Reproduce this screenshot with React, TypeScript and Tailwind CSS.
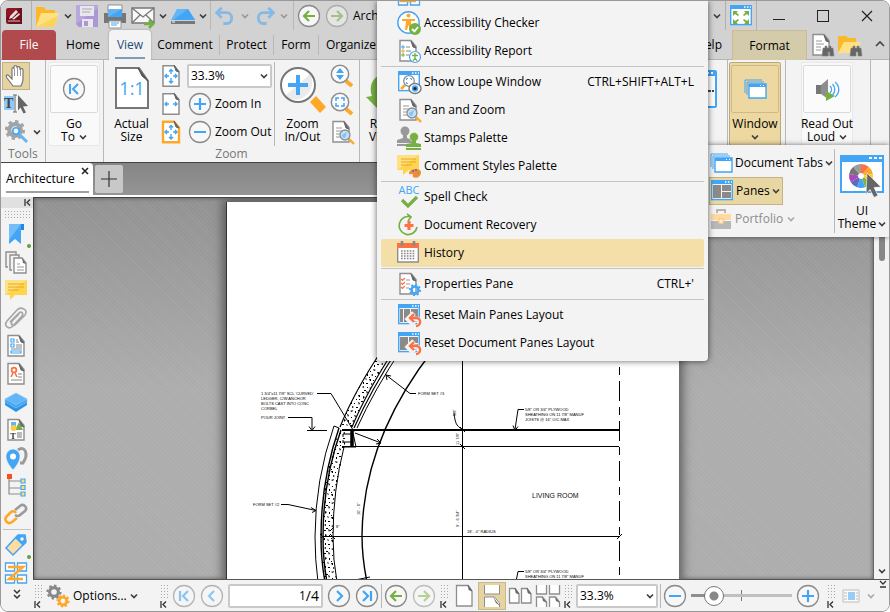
import React from 'react';

type IconProps = { className?: string };
type Children = { children?: React.ReactNode };

const BLUE = '#42a5f5';
const GREEN = '#76b043';
const ORANGE = '#ffa726';
const GRAY = '#8e8e8e';

const Svg = ({ className = 'size-6', box = 24, children }: IconProps & Children & { box?: number }) => (
  <svg className={`${className} shrink-0 overflow-visible`} viewBox={`0 0 ${box} ${box}`} fill="none" aria-hidden="true">
    {children}
  </svg>
);

const Chevron = ({ className = 'text-[#404040]' }: IconProps) => (
  <svg className={`h-2 w-2 shrink-0 ${className}`} viewBox="0 0 8 8" fill="none" aria-hidden="true">
    <path d="M1 2.5l3 3 3-3" stroke="currentColor" strokeWidth="1.7" />
  </svg>
);

// Sheet of paper with a folded corner, used as the base of many icons
const Sheet = () => (
  <>
    <path d="M3 1.5h11l5 6V22H3z" fill="#fff" stroke={GRAY} strokeWidth="1.4" />
    <path d="M14 2l5 7-3-1z" fill="#666" stroke="#666" />
  </>
);

const Gear = ({ cx, cy, r, color }: { cx: number; cy: number; r: number; color: string }) => (
  <>
    <circle cx={cx} cy={cy} r={r * 0.58} stroke={color} strokeWidth={r * 0.42} />
    <circle cx={cx} cy={cy} r={r * 0.86} stroke={color} strokeWidth={r * 0.3} pathLength="16" strokeDasharray="1 1" />
  </>
);

const Lens = ({ x, y }: { x: number; y: number }) => (
  <g transform={`translate(${x} ${y})`}>
    <path d="M4 4l5 5" stroke={ORANGE} strokeWidth="2.4" />
    <circle r="5" fill="#bfe0fa" stroke={GRAY} strokeWidth="1.3" />
    <path d="M-3 0a3 3 0 003 3L2-3z" fill={BLUE} opacity=".5" />
  </g>
);

const WindowFrame = ({ fill = '#fff' }: { fill?: string }) => (
  <>
    <rect x="1.7" y="2" width="20.6" height="18.6" fill={fill} stroke={BLUE} strokeWidth="1.4" />
    <path d="M1 1h22v4H1z" fill={BLUE} />
    <path d="M15 3h1.5M18 3h1.5M21 3h1" stroke="#fff" strokeWidth="1.5" />
  </>
);

const CircleIcon = ({ children, className = 'size-6' }: IconProps & Children) => (
  <Svg className={className}>
    <circle cx="12" cy="12" r="10.5" fill="#f7f7f7" stroke="#8a8a8a" strokeWidth="1.3" />
    {children}
  </Svg>
);

const ArrowLeft = () => <path d="M18 12H7m5-5l-5 5 5 5" stroke={GREEN} strokeWidth="2.2" />;
const ArrowRight = () => <path d="M6 12h11m-5-5l5 5-5 5" stroke={GREEN} strokeWidth="2.2" />;
const PlusSign = () => <path d="M12 6v12M6 12h12" stroke={BLUE} strokeWidth="2.2" />;
const MinusSign = () => <path d="M6 12h12" stroke={BLUE} strokeWidth="2" />;

const LogoIcon = () => (
  <Svg className="size-4" box={16}>
    <rect width="16" height="16" rx="2" fill="#8c1822" />
    <path d="M0 10L14 0h2v16H4z" fill="#6a111b" />
    <path d="M3 11l1-3 6-6 2 2-6 6zM6 11l7-6 1 1.5-6 5z" fill="#f3dcdd" />
    <path d="M2 13h12" stroke="#e8b9bb" strokeWidth="1.2" />
  </Svg>
);

const FolderIcon = () => (
  <Svg>
    <path d="M0 3h8l2 3h9v4L2 22H0z" fill="#fbb829" />
    <path d="M5 9h18l-5 14H0z" fill="#ffe083" />
    <path d="M0 23L22 12l-4 11z" fill="#ffd452" />
  </Svg>
);

const SaveIcon = () => (
  <Svg>
    <path d="M1 1h22v22H4l-3-3z" fill="#b9a8dc" />
    <path d="M1 20L23 4v19H4z" fill="#ac97d4" />
    <path d="M5 2h14v10H5zM7 15h11v8H7z" fill="#e9e6ee" />
    <path d="M7 5h10M7 8h8" stroke="#aaa" />
    <path d="M9 17h4v5H9z" fill="#ac97d4" />
  </Svg>
);

const PrinterIcon = () => (
  <Svg>
    <path d="M5 1h14v7H5z" fill="#fff" stroke={GRAY} />
    <path d="M1 9h22v10H1z" fill="#777" />
    <path d="M5 5h14v8H5z" fill="#64b5f6" />
    <path d="M5 13L19 5v8z" fill={BLUE} />
    <path d="M6 17h12v7H6z" fill="#fff" stroke="#999" />
    <path d="M8 19h8M8 21h6" stroke={BLUE} />
  </Svg>
);

const MailIcon = () => (
  <Svg>
    <path d="M1 4h22v15H1z" fill="#f8f8f8" stroke="#777" strokeWidth="1.4" />
    <path d="M1 4l11 9 11-9M1 19l8-8M23 19l-8-8" stroke="#777" strokeWidth="1.3" />
    <path d="M13 20h9m-4-4l4 4-4 4" stroke={GREEN} strokeWidth="2.6" />
  </Svg>
);

const ScannerIcon = () => (
  <Svg>
    <path d="M6 5h11l7 11H0z" fill="#64b5f6" />
    <path d="M17 5l7 11H2z" fill={BLUE} />
    <path d="M0 17h24v3H0z" fill="#777" />
    <path d="M1 18h3" stroke="#fff" />
  </Svg>
);

const UndoIcon = ({ className = 'size-6' }: IconProps) => (
  <Svg className={className}>
    <path d="M8 2L2 8l6 6M3 8h11c8 0 8 13 0 13h-4" stroke="#85b9e6" strokeWidth="3.4" />
  </Svg>
);

const FullscreenIcon = () => (
  <Svg>
    <WindowFrame />
    <path
      d="M4 7h5L7.500 8.500 10 11l-1 1-3-2-2 2zM20 7h-5l1.500 1.500L14 11l1 1 3-2 2 2zM4 20h5l-1.500-1.500L10 16l-1-1-3 2-2-2zM20 20h-5l1.500-1.500L14 16l1-1 3 2 2-2z"
      fill={GREEN}
    />
  </Svg>
);

const Binoculars = () => (
  <path d="M12 23l1-8h2v-2h2v2h2v-2h2v2h2l1 8h-4v-4h-2v4z" fill="#666" stroke="#888" strokeWidth=".6" />
);

const HandIcon = () => (
  <Svg>
    <path
      d="M9 22l-6-8c-2-3 1-4 2-2l3 3V5c0-2 2-2 2 0V3c0-2 3-2 3 0v1c0-2 3-1.5 3 0v2c0-2 3-1.5 3 0v9c0 3-1 4-2 7z"
      fill="#fff"
      stroke="#777"
      strokeWidth="1.2"
    />
    <path d="M10.500 5v7M13.500 4v8M16.500 6v6" stroke="#999" />
  </Svg>
);

const SelectTextIcon = () => (
  <Svg>
    <path d="M0 4h10v14H0z" fill="#90caf9" />
    <text x="0" y="16" fontSize="14" fontFamily="Liberation Serif, serif" fontWeight="bold" fill="#444">T</text>
    <path d="M9 3h4M9 20h4M11 3v17" stroke="#666" />
    <path d="M14 3l10 11-5 .5 3 6-2.500 1-3-6-2.500 3z" fill="#666" />
  </Svg>
);

const WrenchGearIcon = () => (
  <Svg>
    <Gear cx={10} cy={10} r={10} color="#a3a3a3" />
    <path d="M12 12l10 10" stroke="#64b5f6" strokeWidth="3" />
    <circle cx="11" cy="11" r="3.2" fill="#f3f3f3" stroke={BLUE} strokeWidth="1.600" />
  </Svg>
);

const FitIcon = ({ kind }: { kind: 'page' | 'width' | 'visible' }) => (
  <Svg>
    <path
      d="M4 1.700h11l5 6v14.600H4z"
      fill="#fff"
      stroke={kind === 'visible' ? ORANGE : GRAY}
      strokeWidth={kind === 'visible' ? 2.4 : 1.5}
    />
    <path d="M15 1l5 7-3-1z" fill="#666" stroke="#666" />
    <path d="M10 12H6m2-2l-2 2 2 2M14 12h4m-2-2l2 2-2 2" stroke={BLUE} strokeWidth="1.4" />
    {kind !== 'width' && <path d="M12 10V5.500m-2 2l2-2 2 2M12 14v5m-2-2l2 2 2-2" stroke={BLUE} strokeWidth="1.4" />}
  </Svg>
);

const ActualSizeIcon = () => (
  <svg className="h-[42px] w-[34px]" viewBox="0 0 34 42" fill="none" aria-hidden="true">
    <path d="M1 1h23l9 13v27H1z" fill="#fff" stroke="#777" strokeWidth="2" />
    <path d="M23 1l10 13-6-5z" fill="#555" stroke="#555" />
    <text x="17" y="28" fontSize="18" fontFamily="Open Sans, sans-serif" fontWeight="500" textAnchor="middle" fill={BLUE}>
      1:1
    </text>
  </svg>
);

const MagnifierIcon = () => (
  <svg className="size-[46px]" viewBox="0 0 46 46" fill="none" aria-hidden="true">
    <path d="M30 35l6-6 10 11-6 6z" fill={ORANGE} />
    <circle cx="18" cy="18" r="17" fill="#fff" />
    <path d="M5 29L30 7a17 17 0 01-25 22z" fill="#ebebeb" />
    <circle cx="18" cy="18" r="17" stroke="#777" strokeWidth="2" />
    <path d="M18 8v20M8 18h20" stroke={BLUE} strokeWidth="4" />
  </svg>
);

const SmallMagnifier = ({ kind }: { kind: 'dynamic' | 'marquee' }) => (
  <Svg>
    <path d="M16 17l6 5" stroke={ORANGE} strokeWidth="4" />
    <circle cx="10" cy="10" r="8.700" fill="#fafafa" stroke={GRAY} strokeWidth="1.5" />
    {kind === 'dynamic' ? (
      <path d="M6 9l4-5 4 5zM6 11l4 5 4-5z" fill={BLUE} />
    ) : (
      <path d="M6 9V6h3M11 6h3v3M14 11v3h-3M9 14H6v-3" stroke={BLUE} strokeWidth="1.5" />
    )}
  </Svg>
);

const PanZoomIcon = () => (
  <Svg>
    <Sheet />
    <path d="M6 8h6M6 11h8M6 14h5M6 17h5" stroke="#999" />
    <Lens x={15} y={15} />
  </Svg>
);

const RotateIcon = () => (
  <svg className="size-[46px]" viewBox="0 0 46 46" fill="none" aria-hidden="true">
    <path d="M1 30l12 12 9-4C7 33 10 15 26 10l-4-5C6 9 4 20 7 29z" fill={GREEN} />
  </svg>
);

const WindowsIcon = ({ className = 'size-6' }: IconProps) => (
  <Svg className={className}>
    <path d="M2 16V3h17M4 18V5h17" stroke={BLUE} />
    <path d="M6 7h17v14H6z" fill="#fff" stroke={BLUE} strokeWidth="1.4" />
    <path d="M6 7h17v3H6z" fill={BLUE} />
    <path d="M17 8.500h1M20 8.500h1" stroke="#fff" />
  </Svg>
);

const SpeakerIcon = () => (
  <Svg>
    <path d="M1 8h5v9H1z" fill="#777" />
    <path d="M6 8l7-6v20l-7-5z" fill="#8e8e8e" />
    <path d="M15 9c2 2 2 5 0 7M17.500 7c3 3 3 8 0 11M20 5c5 4 5 11 0 15" stroke={BLUE} strokeWidth="1.3" />
    <path d="M11 14l9 5-9 5z" fill={GREEN} />
  </Svg>
);

const PanesIcon = ({ columns = false, reset = false }: { columns?: boolean; reset?: boolean }) => (
  <Svg>
    <WindowFrame fill="#f3f3f3" />
    <path d={columns ? 'M3 6h3v13H3zM7 6h6v13H7zM14 6h7v13h-7z' : 'M3 6h8v13H3zM12 6h9v6h-9zM12 13h9v6h-9z'} fill="#8a8a8a" />
    {reset && (
      <>
        <path d="M17 10l-6 6 6 6M13 16h6c6 0 5 8 0 8" stroke="#f3f3f3" strokeWidth="5" />
        <path d="M17 11l-4 4 4 4M14 15h5c6 0 5 8 0 8" stroke="#ff7043" strokeWidth="2.4" />
      </>
    )}
  </Svg>
);

const PortfolioIcon = () => (
  <Svg>
    <path d="M8 6V3h8v3" stroke="#b5b5b5" strokeWidth="2" />
    <path d="M2 7h20v6H2z" fill="#ffd9a0" />
    <path d="M2 14h20v8H2z" fill="#b8b8b8" />
    <circle cx="12" cy="14" r="2.5" fill="#f3f3f3" stroke="#ffca80" strokeWidth="1.5" />
  </Svg>
);

const wheel = ['#ff7043', '#ffa726', '#ffca28', '#7cb342', '#42a5f5', '#5c6bc0', '#ab47bc', '#757575', '#9e9e9e'];

const ThemeIcon = () => (
  <svg className="h-[44px] w-[46px]" viewBox="0 0 46 44" fill="none" aria-hidden="true">
    <rect x="2" y="2" width="42" height="36" fill="#fff" stroke={BLUE} strokeWidth="2" />
    <path d="M1 1h44v7H1z" fill={BLUE} />
    <path d="M30 4h3M35 4h3M40 4h3" stroke="#fff" strokeWidth="2" />
    {wheel.map((color, i) => (
      <circle
        key={color}
        cx="22"
        cy="22"
        r="7.5"
        stroke={color}
        strokeWidth="9"
        pathLength="9"
        strokeDasharray="1 8"
        transform={`rotate(${i * 40 - 90} 22 22)`}
      />
    ))}
    <path d="M28 19l14 14-7 .5 4 8-4 2-4-8-4 5z" fill="#666" stroke="#fff" strokeWidth=".6" />
  </svg>
);

const AccessCheckIcon = () => (
  <Svg>
    <circle cx="11.500" cy="11.500" r="10.700" fill="#fff" stroke={BLUE} strokeWidth="1.4" />
    <circle cx="11.500" cy="4.500" r="2" fill={ORANGE} />
    <path d="M5 8h13v2h-4l1 9h-2l-1.500-5L10 19H8l1-9H5z" fill={ORANGE} />
    <circle cx="18" cy="18" r="6" fill={GREEN} />
    <path d="M15 18l2.500 2.500L21 16" stroke="#fff" strokeWidth="1.8" />
  </Svg>
);

const AccessReportIcon = () => (
  <Svg>
    <Sheet />
    <path d="M9 8h4M9 12h5M9 16h3" stroke="#888" />
    <path d="M5 7h2v2H5z" stroke={BLUE} />
    <path d="M5 11h2v2H5z" stroke={ORANGE} />
    <path d="M5 15h2v2H5z" stroke={GREEN} />
    <circle cx="18" cy="18" r="5.500" fill="#fff" stroke={BLUE} strokeWidth="1.2" />
    <path d="M15 16.500h6M18 16v3l-2 3M18 19l2 3M18 14v2" stroke={GREEN} strokeWidth="1.3" />
  </Svg>
);

const LoupeIcon = () => (
  <Svg>
    <WindowFrame />
    <path d="M4 19l4-4" stroke={ORANGE} strokeWidth="2.5" />
    <circle cx="12" cy="11" r="5.300" fill="#fff" stroke={GRAY} strokeWidth="1.3" />
    <path d="M9.500 10V8.500H11M13 8.500h1.500V10M9.500 12v1.500H11" stroke={BLUE} />
    <ellipse cx="18" cy="18.500" rx="6" ry="5" fill="#fff" stroke="#777" strokeWidth="1.4" />
    <circle cx="18" cy="18.500" r="3.200" fill={BLUE} />
    <circle cx="18" cy="18.500" r="1.600" fill="#222" />
  </Svg>
);

const StampIcon = () => (
  <Svg>
    <circle cx="8" cy="5" r="4.500" fill="#999" />
    <path d="M6 8h4v4l6 2v3H0v-3l6-2zM0 18h16v2H0z" fill="#999" />
    <circle cx="17" cy="11" r="4.500" fill={GREEN} stroke="#f3f3f3" strokeWidth=".6" />
    <path d="M15 14h4v3l5 1v3H9v-3l6-1zM9 22h15v2H9z" fill={GREEN} />
  </Svg>
);

const CommentIcon = () => (
  <Svg>
    <path d="M1 2h22v15H11l-5 5v-5H1z" fill="#ffd54f" />
    <path d="M1 17L23 2H1z" fill="#ffe082" />
    <path d="M4 6h16M4 9h16M4 12h11" stroke="#e5a91a" strokeWidth="1.2" />
  </Svg>
);

const CommentStylesIcon = () => (
  <Svg>
    <path d="M0 1h22v15H12l-6 5v-5H0z" fill="#ffd54f" />
    <path d="M0 16L22 1H0z" fill="#ffe082" />
    <path d="M4 5h15M4 8h15M4 11h11" stroke="#e5a91a" strokeWidth="1.2" />
    <path d="M12 19c0-4 11-6 12-1 0 5-5 7-8 5-1-1 1-3-1-3s-3 1-3-1z" fill="#f58a34" />
    <path d="M15 17h2M18 16h2" stroke="#6a5acd" strokeWidth="1.5" />
    <circle cx="21" cy="19" r="1" fill={GREEN} />
  </Svg>
);

const SpellIcon = () => (
  <Svg>
    <text x="12" y="9" fontSize="11" fontFamily="Open Sans, sans-serif" textAnchor="middle" fill={BLUE}>ABC</text>
    <path d="M5 15l6 6L20 12" stroke={GREEN} strokeWidth="3.2" />
  </Svg>
);

const RecoveryIcon = () => (
  <Svg>
    <path d="M14 4a9 9 0 106 10M10 1l4 3-3 4" stroke={GREEN} strokeWidth="1.7" />
    <path d="M12 8v9M7.500 12.500h9" stroke="#ff7043" strokeWidth="3.2" />
  </Svg>
);

const CalendarIcon = () => (
  <Svg>
    <path d="M.7 3h20.600v18H.7z" fill="#fff" stroke={GRAY} strokeWidth="1.4" />
    <path d="M0 2h22v5H0z" fill="#ff7043" />
    <path d="M5 0v5M17 0v5" stroke="#888" strokeWidth="2.6" />
    <path d="M4 10h14M4 12.500h14M4 15h14M4 17.500h14" stroke="#888" strokeWidth="1.5" strokeDasharray="1.7 1.2" />
  </Svg>
);

const PropertiesIcon = () => (
  <Svg>
    <Sheet />
    <path d="M9 8h4M9 12h4M9 16h3" stroke="#999" />
    <path d="M4 7l1.500 1.500L8 6M4 11l1.500 1.500L8 10M4 15l1.500 1.500L8 14" stroke="#ff7043" strokeWidth="1.2" />
    <Gear cx={18} cy={18} r={6} color={BLUE} />
  </Svg>
);

const ReadingOrderIcon = () => (
  <Svg>
    <path d="M1.500 2h9v8h-9zM13.500 2h9v8h-9zM1.500 14h9v8h-9zM13.500 14h9v8h-9z" fill="#fff" stroke={BLUE} strokeWidth="1.3" />
    <path d="M4 6h15L5 18h14" stroke={ORANGE} strokeWidth="2.4" />
  </Svg>
);

const BookmarkIcon = () => (
  <Svg>
    <path d="M16 2h4v6h-4z" fill="#1e88e5" />
    <path d="M5 2h12v20l-6-5-6 5z" fill={BLUE} />
    <path d="M5 2h12L5 18z" fill="#74bdf8" />
  </Svg>
);

const ThumbnailsIcon = () => (
  <Svg>
    <path d="M4 17H2V2h10v3M8 20H6V5h9v3" stroke={GRAY} strokeWidth="1.4" />
    <path d="M10 8h8l4 5v10H10z" fill="#fff" stroke={GRAY} strokeWidth="1.4" />
    <path d="M18 8l4 6-3-1z" fill="#666" />
    <path d="M13 14h3M13 17h7M13 20h7" stroke="#999" />
  </Svg>
);

const ClipIcon = () => (
  <Svg>
    <path
      d="M6 16l9-9c2-2 5 0 3 3l-9 10c-4 4-10 0-6-5L13 4c4-4 12 0 8 5l-9 9c-3 3-6 0-4-3l7-7"
      stroke="#a6a6a6"
      strokeWidth="1.7"
    />
  </Svg>
);

const FieldsIcon = () => (
  <Svg>
    <path d="M4 1.500h11l5 6V22H4z" fill="#fff" stroke={GRAY} strokeWidth="1.4" />
    <path d="M15 2l5 7-3-1z" fill="#666" stroke="#666" />
    <path d="M7 5h3v3H7zM7 10h3v3H7zM7 17h10v2H7z" stroke={BLUE} strokeWidth="1.2" />
    <path d="M12 6h2M12 8h3M12 11h6M12 13h6M7 15h11" stroke="#888" />
  </Svg>
);

const CertificateIcon = () => (
  <Svg>
    <path d="M4 1.500h11l5 6V22H4z" fill="#fff" stroke={GRAY} strokeWidth="1.4" />
    <path d="M15 2l5 7-3-1z" fill="#666" stroke="#666" />
    <path d="M9 11l-2 4M11 11l2 4" stroke="#ff7043" strokeWidth="1.6" />
    <circle cx="10" cy="8" r="2.400" stroke="#ff7043" strokeWidth="1.8" />
    <path d="M14 12h4M14 15h4M7 18h11" stroke="#888" />
  </Svg>
);

const LayersIcon = () => (
  <Svg>
    <path d="M1 15l11 7 11-7v-4H1z" fill="#2c93e8" />
    <path d="M1 12l11 6 11-6v-3H1z" fill={BLUE} stroke="#90caf9" strokeWidth=".6" />
    <path d="M12 3l11 6-11 6L1 9z" fill="#64b5f6" stroke="#90caf9" strokeWidth=".6" />
  </Svg>
);

const ContentIcon = () => (
  <Svg>
    <path d="M4 1.500h11l5 6V22H4z" fill="#fff" stroke={GRAY} strokeWidth="1.4" />
    <path d="M15 2l5 7-3-1z" fill="#666" stroke="#666" />
    <path d="M11 12l4-8 4 8z" fill={GREEN} />
    <path d="M7 4h5v4H7z" fill="#64b5f6" />
    <circle cx="9.500" cy="10" r="3" fill="#ffca45" />
    <text x="6" y="21" fontSize="9" fontFamily="Liberation Serif, serif" fontWeight="bold" fill="#444">T</text>
    <path d="M13 15h5M13 17h5M13 19h5" stroke="#777" />
  </Svg>
);

const PinIcon = () => (
  <Svg>
    <path d="M14 4c7-5 11 4 5 13h-3" stroke="#9a9a9a" strokeWidth="3" />
    <path d="M9 24C-4 10 4 3 9 3s13 7 0 21z" fill={BLUE} stroke="#f3f3f3" strokeWidth=".8" />
    <circle cx="9" cy="10.500" r="3" fill="#fff" />
  </Svg>
);

const TreeIcon = () => (
  <Svg>
    <path d="M5 4v16h12M5 7h12M5 14h12" stroke={GRAY} strokeWidth="1.2" />
    <path d="M3 0h5v5H3z" fill="#f4511e" />
    <path d="M17 5h4v4h-4zM17 11.500h4v4h-4zM17 18h4v4h-4z" fill="#ffe066" stroke={BLUE} strokeWidth="1.2" />
  </Svg>
);

const LinkIcon = () => (
  <Svg>
    <path d="M11 8l5-4c4-3 8 2 5 5l-5 4c-2 2-5 0-5 0" stroke="#9a9a9a" strokeWidth="2.6" />
    <path d="M12 11c-2-3-5-1-5-1l-4 4c-4 4 1 9 5 6l5-4" stroke={ORANGE} strokeWidth="2.6" />
  </Svg>
);

const TagIcon = () => (
  <Svg>
    <path d="M14 2h7l1 7L9 22l-7-7z" fill="#ffdda0" stroke={BLUE} strokeWidth="1.5" />
    <path d="M11 5l3-3h7l1 8-3 3z" fill={BLUE} />
    <circle cx="18" cy="6" r="1.700" fill="#fff" />
  </Svg>
);

const DockMark = () => (
  <svg className="h-[7px] w-[7px]" viewBox="0 0 7 7" fill="none" aria-hidden="true">
    <path d="M1 0v7M6 .5l-3 3 3 3" stroke="#333" strokeWidth="1.3" />
  </svg>
);

const Dots = ({ className = '' }: IconProps) => (
  <div className={`bg-[radial-gradient(#a9a9a9_1px,transparent_1px)] bg-[size:3px_3px] ${className}`} />
);

const Grip = () => (
  <div className="flex w-2 shrink-0 flex-col gap-px">
    <Dots className="h-4 w-2" />
    <DockMark />
  </div>
);

const Divider = ({ className = 'h-6' }: IconProps) => <div className={`w-px shrink-0 bg-[#b8b8b8] ${className}`} />;

const ToolButton = ({ label, children, className = '' }: { label: string } & IconProps & Children) => (
  <button aria-label={label} className={`flex shrink-0 items-center justify-center ${className}`}>
    {children}
  </button>
);

const ZoomSelect = ({ className }: IconProps) => (
  <div className={`relative shrink-0 ${className}`}>
    <select
      aria-label="Zoom level"
      className="h-6 w-full appearance-none rounded-xs border-2 border-[#c9c9c9] bg-white pl-0.5 leading-5"
    >
      <option>33.3%</option>
      <option>50%</option>
      <option>100%</option>
    </select>
    <div className="pointer-events-none absolute inset-y-0 right-1 flex items-center">
      <Chevron />
    </div>
  </div>
);

const TitleBar = () => (
  <header className="flex h-[29px] shrink-0 items-center bg-[#d2d2d2]">
    <div className="flex h-full w-[31px] items-center justify-center border-r border-[#b0b0b0] pr-1">
      <LogoIcon />
    </div>
    <div className="flex items-center pl-1">
      <ToolButton label="Open"><FolderIcon /></ToolButton>
      <ToolButton label="Open recent" className="w-[15px]"><Chevron /></ToolButton>
    </div>
    <div className="flex items-center gap-1">
      <ToolButton label="Save"><SaveIcon /></ToolButton>
      <ToolButton label="Print"><PrinterIcon /></ToolButton>
      <ToolButton label="Email"><MailIcon /></ToolButton>
    </div>
    <ToolButton label="Email options" className="w-4"><Chevron /></ToolButton>
    <ToolButton label="Scan"><ScannerIcon /></ToolButton>
    <ToolButton label="Scan options" className="w-[15px]"><Chevron /></ToolButton>
    <Divider className="h-full" />
    <div className="flex items-center pl-1">
      <ToolButton label="Undo"><UndoIcon className="size-5" /></ToolButton>
      <ToolButton label="Undo list" className="w-5"><Chevron className="text-[#999]" /></ToolButton>
      <ToolButton label="Redo"><UndoIcon className="size-5 -scale-x-100" /></ToolButton>
      <ToolButton label="Redo list" className="w-[18px]"><Chevron className="text-[#999]" /></ToolButton>
    </div>
    <Divider className="h-full" />
    <div className="flex items-center gap-1 pl-[3px]">
      <ToolButton label="Back"><CircleIcon><ArrowLeft /></CircleIcon></ToolButton>
      <ToolButton label="Forward" className="opacity-50"><CircleIcon><ArrowRight /></CircleIcon></ToolButton>
      <span>Architecture</span>
    </div>
    <div className="ml-auto flex h-full items-center">
      <ToolButton label="Launch" className="w-4"><Chevron /></ToolButton>
      <div className="flex h-full w-8 items-center justify-center border-x border-[#b0b0b0]">
        <ToolButton label="Full screen"><FullscreenIcon /></ToolButton>
      </div>
      <ToolButton label="Minimize" className="h-full w-11">
        <Svg className="size-3" box={12}><path d="M0 9.500h12" stroke="#222" strokeWidth="1.2" /></Svg>
      </ToolButton>
      <ToolButton label="Maximize" className="h-full w-11">
        <Svg className="size-3" box={12}><rect x=".5" y=".5" width="11" height="11" stroke="#222" /></Svg>
      </ToolButton>
      <ToolButton label="Close" className="h-full w-11">
        <Svg className="size-3" box={12}><path d="M1 1l10 10M11 1L1 11" stroke="#222" strokeWidth="1.2" /></Svg>
      </ToolButton>
    </div>
  </header>
);

const RibbonTabs = () => (
  <nav className="flex h-[30px] shrink-0 items-center bg-[#d2d2d2] pl-px shadow-[inset_0_-1px_#b5b5b5]">
    <button className="h-full w-[54px] rounded-t-sm bg-[#b04a4c] text-white">File</button>
    <button className="h-full w-[53px] pl-px">Home</button>
    <button className="flex h-full w-[42px] flex-col items-center rounded-t-sm bg-[#f3f3f3] pt-[7px] text-[#1f4e79] shadow-[0_0_2px_#888]">
      <span className="leading-4">View</span>
      <span className="mt-1 h-0.5 w-[30px] bg-[#7d9db8]" />
    </button>
    <button className="w-[68px]">Comment</button>
    <Divider className="h-5" />
    <button className="w-[53px]">Protect</button>
    <Divider className="h-5" />
    <button className="w-11">Form</button>
    <Divider className="h-5" />
    <button className="w-16">Organize</button>
    <div className="ml-auto flex h-full items-center">
      <button className="w-10 pr-2.5 text-right">Help</button>
      <button className="h-full w-[75px] border border-b-0 border-[#c9bc94] bg-[#d3cba9]">Format</button>
      <ToolButton label="Find in document" className="ml-[3px]">
        <Svg><Sheet /><path d="M6 8h6M6 11h8M6 14h5M6 17h5" stroke="#999" /><Binoculars /></Svg>
      </ToolButton>
      <ToolButton label="Search folder" className="ml-1">
        <Svg>
          <path d="M0 3h8l2 2h8v5L2 19H0z" fill="#fbb829" />
          <path d="M6 9h17l-5 11H0z" fill="#ffe083" />
          <Binoculars />
        </Svg>
      </ToolButton>
      <ToolButton label="Collapse ribbon" className="w-[27px] pl-2">
        <Svg className="size-2.5" box={10}><path d="M1 6l4-4 4 4" stroke="#444" strokeWidth="1.6" /></Svg>
      </ToolButton>
    </div>
  </nav>
);

const BigButton = ({ icon, children, className = '' }: { icon: React.ReactNode } & Children & IconProps) => (
  <button className={`flex shrink-0 flex-col items-center pt-[5px] leading-[13px] ${className}`}>
    <span className="flex h-12 items-start justify-center">{icon}</span>
    <span className="pt-0.5">{children}</span>
  </button>
);

const CardButton = ({ icon, children, active = false }: { icon: React.ReactNode; active?: boolean } & Children) => (
  <button
    className={`flex h-[84px] w-[52px] shrink-0 flex-col items-center rounded-xs border pt-0.5 leading-[13px] ${
      active ? 'border-[#b9a97b] bg-[#ecd8a0]' : 'border-[#e9e9e9] bg-[#f9f9f9]'
    }`}
  >
    <span
      className={`flex h-12 w-12 items-center justify-center rounded-xs border ${
        active ? 'border-[#cdbb87]' : 'border-[#d9d9d9] bg-[#fbfbfb]'
      }`}
    >
      {icon}
    </span>
    <span className="pt-1 whitespace-nowrap">{children}</span>
  </button>
);

const Ribbon = () => (
  <div className="flex h-[102px] shrink-0 bg-[#f3f3f3]">
    <section className="flex w-[45px] shrink-0 flex-col border-r border-[#b8b8b8] pt-0.5 pl-px">
      <ToolButton label="Hand" className="size-7 border border-[#bfb086] bg-[#e5d3a2]"><HandIcon /></ToolButton>
      <ToolButton label="Select text" className="size-7"><SelectTextIcon /></ToolButton>
      <button aria-label="Other tools" className="flex h-7 items-center gap-1 pl-[3px]"><WrenchGearIcon /><Chevron /></button>
      <h2 className="pl-1.5 leading-4 text-[#777]">Tools</h2>
    </section>
    <section className="flex w-[58px] shrink-0 border-r border-[#b8b8b8] pt-0.5 pl-0.5">
      <CardButton icon={<CircleIcon><path d="M8 7v10M16 7l-5 5 5 5" stroke={BLUE} strokeWidth="2" /></CircleIcon>}>
        Go<br />
        <span className="flex items-center gap-1">To <Chevron /></span>
      </CardButton>
    </section>
    <section className="flex w-64 shrink-0 flex-col border-r border-[#b8b8b8] pt-0.5">
      <div className="flex h-[84px]">
        <BigButton className="w-[55px]" icon={<ActualSizeIcon />}>Actual<br />Size</BigButton>
        <div className="mr-1 flex flex-col">
          <ToolButton label="Fit page" className="h-7"><FitIcon kind="page" /></ToolButton>
          <ToolButton label="Fit width" className="h-7"><FitIcon kind="width" /></ToolButton>
          <ToolButton label="Fit visible" className="h-7"><FitIcon kind="visible" /></ToolButton>
        </div>
        <div className="flex flex-col">
          <div className="flex h-7 items-center"><ZoomSelect className="w-[85px]" /></div>
          <button className="flex h-7 items-center gap-[3px] pl-px"><CircleIcon><PlusSign /></CircleIcon>Zoom In</button>
          <button className="flex h-7 items-center gap-[3px] pl-px"><CircleIcon><MinusSign /></CircleIcon>Zoom Out</button>
        </div>
        <Divider className="ml-0.5 h-full" />
        <BigButton className="w-[55px]" icon={<MagnifierIcon />}>Zoom<br />In/Out</BigButton>
        <div className="flex flex-col">
          <ToolButton label="Dynamic zoom" className="h-7"><SmallMagnifier kind="dynamic" /></ToolButton>
          <ToolButton label="Marquee zoom" className="h-7"><SmallMagnifier kind="marquee" /></ToolButton>
          <ToolButton label="Pan and zoom" className="h-7"><PanZoomIcon /></ToolButton>
        </div>
      </div>
      <h2 className="text-center leading-4 text-[#777]">Zoom</h2>
    </section>
    <section className="flex w-[58px] shrink-0 pt-0.5">
      <BigButton className="w-14" icon={<RotateIcon />}>
        Rotate<br />
        <span className="flex items-center gap-1">View <Chevron /></span>
      </BigButton>
    </section>
    <div className="ml-auto flex shrink-0">
      <section className="flex border-r border-[#b8b8b8] pt-[9px] pr-2.5">
        <ToolButton label="Split view" className="h-10">
          <svg className="h-[38px] w-8" viewBox="0 0 32 38" fill="none" aria-hidden="true">
            <rect x="1" y="1" width="30" height="36" rx="1" fill="#fff" stroke={BLUE} strokeWidth="2" />
            <path d="M1 1h30v5H1z" fill={BLUE} />
            <path d="M22 3h2M26 3h2" stroke="#fff" strokeWidth="2" />
            <path d="M3 21h26" stroke="#444" strokeWidth="2" strokeDasharray="3 1" />
          </svg>
        </ToolButton>
      </section>
      <section className="flex w-[58px] border-r border-[#b8b8b8] pt-0.5 pl-px">
        <CardButton active icon={<WindowsIcon />}>
          Window<br />
          <span className="flex h-[13px] items-center justify-center"><Chevron /></span>
        </CardButton>
      </section>
      <section className="flex w-[85px] justify-center border-r border-[#b8b8b8] pt-0.5 pr-0.5">
        <CardButton icon={<SpeakerIcon />}>
          Read Out<br />
          <span className="flex items-center justify-center gap-1">Loud <Chevron /></span>
        </CardButton>
      </section>
      <div className="w-[18px]" />
    </div>
  </div>
);

const DocumentTabs = () => (
  <div className="flex h-[35px] shrink-0 items-start border-t border-b-2 border-t-[#444] border-b-white bg-linear-to-b from-[#858585] to-[#959595]">
    <div className="relative h-8 w-[92px] rounded-tr-sm bg-white pl-[5px] leading-8">
      Architecture
      <button aria-label="Close tab" className="absolute top-1 right-1">
        <Svg className="size-2" box={8}><path d="M1 1l6 6M7 1L1 7" stroke="#222" strokeWidth="1.5" /></Svg>
      </button>
      <span className="absolute right-1 bottom-0.5 left-[5px] h-0.5 bg-[#a0a0a0]" />
    </div>
    <ToolButton label="New tab" className="mt-0.5 ml-0.5 size-7 rounded-xs bg-[#c8c8c8]">
      <Svg className="size-4" box={16}><path d="M8 0v16M0 8h16" stroke="#333" strokeWidth="1.2" /></Svg>
    </ToolButton>
  </div>
);

const paneButtons = [
  { label: 'Bookmarks', icon: <BookmarkIcon />, dot: true },
  { label: 'Thumbnails', icon: <ThumbnailsIcon /> },
  { label: 'Comments', icon: <CommentIcon /> },
  { label: 'Attachments', icon: <ClipIcon /> },
  { label: 'Fields', icon: <FieldsIcon /> },
  { label: 'Signatures', icon: <CertificateIcon /> },
  { label: 'Layers', icon: <LayersIcon /> },
  { label: 'Content', icon: <ContentIcon /> },
  { label: 'Destinations', icon: <PinIcon /> },
  { label: 'Structure', icon: <TreeIcon /> },
  { label: 'Links', icon: <LinkIcon /> },
];

const PaneButton = ({ label, icon, dot }: { label: string; icon: React.ReactNode; dot?: boolean }) => (
  <button aria-label={label} className="relative flex h-7 w-full shrink-0 items-center justify-center pr-0.5">
    {icon}
    {dot && <span className="absolute right-0.5 bottom-0 size-1 rounded-full bg-[#6a9e3a]" />}
  </button>
);

const Sidebar = () => (
  <aside className="flex w-8 shrink-0 flex-col items-center bg-[#f3f3f3]">
    <div className="flex h-[11px] w-full shrink-0 items-center justify-end bg-[#e0e0e0] pr-0.5"><DockMark /></div>
    <Dots className="mt-0.5 h-2.5 w-[27px] shrink-0" />
    {paneButtons.map((pane) => <PaneButton key={pane.label} {...pane} />)}
    <div className="my-px h-px w-7 shrink-0 bg-[#c4c4c4]" />
    <PaneButton label="Tags" icon={<TagIcon />} dot />
    <PaneButton label="Order" icon={<ReadingOrderIcon />} />
    <ToolButton label="More panes" className="mt-0.5">
      <Svg className="size-3" box={12}><path d="M3 1l3 3 3-3M3 6l3 3 3-3" stroke="#333" strokeWidth="1.5" /></Svg>
    </ToolButton>
  </aside>
);

const PlanNote = ({ x, y, lines }: { x: number; y: number; lines: string[] }) => (
  <text fontSize="4" fill="#000">
    {lines.map((line, i) => <tspan key={line} x={x} y={y + i * 5}>{line}</tspan>)}
  </text>
);

// Coordinates follow the sheet: the wall curves down its left half
const FloorPlan = () => (
  <svg
    className="h-[378px] w-[453px] shrink-0 border-l border-[#333] bg-white shadow-[0_0_10px_3px_#555]"
    viewBox="227 202 452 378"
    preserveAspectRatio="xMinYMin slice"
    fill="none"
    stroke="#000"
    fontFamily="Liberation Sans, sans-serif"
    role="img"
    aria-label="Floor plan"
  >
    <defs>
      <pattern id="concrete" width="19" height="23" patternUnits="userSpaceOnUse">
        <path
          d="M1 1h2v1H1zM5 0l2 1-1 2zM9 3h1v1H9zM12 1l3 1-2 1zM16 4h2v2h-1zM2 5l2 1-2 2zM6 6h1v2H6zM10 7l2-1v2zM14 8h1v1h-1zM0 10h2v1H0zM4 10l2 1-1 1zM8 11h2v2H9zM12 12h1v1h-1zM16 11l2 1-1 2zM2 14h1v2H2zM5 15h2v1H5zM10 15l2 1-2 1zM14 16h2v1h-2zM1 19l2-1v2zM6 19h1v1H6zM8 20l3-1-1 2zM13 20h1v2h-1zM16 19h2v1h-2zM3 22h2v1H3zM17 8h1v1h-1zM8 9h1v1H8z"
          fill="#000"
          stroke="none"
        />
      </pattern>
    </defs>
    <path
      d="M384 347Q355 390 340 427H352Q367 391 396 347zM339 430Q321 480 321 537 321 560 325 582H337Q333 560 333 537 333 490 345 447V430z"
      fill="url(#concrete)"
      stroke="none"
    />
    <path d="M384 347Q355 390 340 427M396 347Q367 391 352 427M399 347Q371 390 354 428" strokeWidth="1.2" />
    <path d="M403 347Q374 390 357 428M339 428L334 426Q315 480 315 537 315 560 318 582M344 447Q333 490 333 537 333 560 337 582" />
    <path d="M339 428Q321 480 321 537 321 560 325 582M341 430Q323 480 323 537 323 560 327 582" strokeWidth="1.4" />
    <path d="M433 350Q363 440 362 535 362 558 367 582" strokeWidth="1.4" />
    <path d="M342 430h277" strokeWidth="2" />
    <path d="M342 446.500h277M322 536.500h297M462.500 350v232" />
    <path d="M619.500 341v240" strokeDasharray="20 6 8 6" />
    <path d="M343 434h9M343 442h9M343 434v3M343 440v3M355 433l26 10-4-4M381 443l-5 1M344 447h12l-3-14" />
    <path d="M352 430v16" strokeWidth="3.5" />
    <path d="M317 393.500h14l23 38M288 417.500h24v12m-3-3l3 4 3-4M307 430.500h20M281 504.500h7l28 6-5-3m5 3l-4 2" />
    <path d="M416 393.500h-6L386 375l1 5m-1-5l5 1M524 409.500h-6l-3 20m-2-4l2 5 3-4M454 413c1 9 2 13 8 16" />
    <path d="M330 531l4-4M460 427l5 5M460 444l5 5M617 539l5-5M320 534l5 5M330 534l5 5M524 571.500h-6l-2 10M355 580l15-3" />
    <g stroke="none">
      <PlanNote x={261} y={395} lines={['1 3/4"x11 7/8" SCL \'CURVED\'', 'LEDGER, C/W ANCHOR', 'BOLTS CAST INTO CONC', 'CORBEL']} />
      <PlanNote x={261} y={419} lines={['POUR JOINT']} />
      <PlanNote x={253} y={506} lines={['FORM SET #2']} />
      <PlanNote x={418} y={395} lines={['FORM SET #3']} />
      <PlanNote x={525} y={411} lines={['5/8" OR 3/4" PLYWOOD', 'SHEATHING ON 11 7/8" MANUF', 'JOISTS @ 16" O/C MAX']} />
      <PlanNote x={525} y={573} lines={['5/8" OR 3/4" PLYWOOD', 'SHEATHING ON 11 7/8" MANUF']} />
      <PlanNote x={467} y={533} lines={["18' - 0\"  RADIUS"]} />
      <PlanNote x={336} y={528} lines={['8"']} />
      <g fontSize="4" fill="#000">
        <text transform="translate(459 527) rotate(-90)">9' - 6 3/4"</text>
        <text transform="translate(459 445) rotate(-90)">11 7/8"</text>
        <text transform="translate(456 416) rotate(-90)">5/8"</text>
        <text transform="translate(360 515) rotate(-90)">10' - 0"</text>
      </g>
      <text x="532" y="498" fontSize="7" fill="#111">LIVING ROOM</text>
    </g>
  </svg>
);

const Canvas = () => (
  <div className="flex min-h-0 flex-1">
    <main className="flex min-w-0 flex-1 justify-center overflow-hidden border-t border-l border-[#444] bg-[repeating-linear-gradient(45deg,#ffffff0c_0_1px,transparent_1px_3px),linear-gradient(#929292,#adadad_50%)] pt-1 pr-0.5 shadow-[inset_0_0_4px_#555]">
      <FloorPlan />
    </main>
    <div className="flex w-4 shrink-0 flex-col items-center justify-between border-l border-[#666] bg-[#f3f3f3] pb-1">
      <div className="h-16 w-1.5 rounded-full bg-[#888]" />
      <Chevron />
    </div>
  </div>
);

const PageShape = ({ x, y, w = 9, h = 14 }: { x: number; y: number; w?: number; h?: number }) => (
  <g transform={`translate(${x} ${y})`}>
    <path d={`M.5 .5H${w - 4}L${w} 6V${h}H.5z`} fill="#fff" stroke={GRAY} strokeWidth="1.3" />
    <path d={`M${w - 4} 0L${w} 6l-3-1z`} fill="#666" stroke="#666" strokeWidth=".6" />
  </g>
);

const StatusBar = () => (
  <footer className="flex h-8 shrink-0 items-center gap-1 border-t border-[#555] bg-[#f3f3f3] pl-px">
    <Grip />
    <button className="flex w-[110px] shrink-0 items-center gap-[3px]">
      <Svg><Gear cx={8} cy={8} r={7.5} color="#888" /><Gear cx={17} cy={17} r={6.5} color={ORANGE} /></Svg>
      Options...
      <Chevron />
    </button>
    <Grip />
    <ToolButton label="First page" className="opacity-60"><CircleIcon><path d="M8 7v10M16 7l-5 5 5 5" stroke={BLUE} strokeWidth="2.2" /></CircleIcon></ToolButton>
    <ToolButton label="Previous page" className="opacity-60"><CircleIcon><path d="M14 7l-5 5 5 5" stroke={BLUE} strokeWidth="2" /></CircleIcon></ToolButton>
    <label className="flex h-6 w-[95px] shrink-0 items-center rounded-xs border-2 border-[#c9c9c9] bg-white">
      <input aria-label="Page number" defaultValue="1" className="w-full min-w-0 flex-1 text-right outline-none" />
      <span className="pr-0.5 text-sm">/4</span>
    </label>
    <ToolButton label="Next page"><CircleIcon><path d="M10 7l5 5-5 5" stroke={BLUE} strokeWidth="2.2" /></CircleIcon></ToolButton>
    <ToolButton label="Last page"><CircleIcon><path d="M16 7v10M8 7l5 5-5 5" stroke={BLUE} strokeWidth="2.2" /></CircleIcon></ToolButton>
    <Divider className="-mx-0.5 h-6" />
    <ToolButton label="Previous view"><CircleIcon><ArrowLeft /></CircleIcon></ToolButton>
    <ToolButton label="Next view" className="opacity-50"><CircleIcon><ArrowRight /></CircleIcon></ToolButton>
    <Grip />
    <ToolButton label="Single page"><Svg><PageShape x={4} y={1} w={16} h={21} /></Svg></ToolButton>
    <ToolButton label="Continuous" className="-mx-0.5 size-7 border border-[#c9b888] bg-[#e5d3a2]">
      <Svg>
        <path d="M4.500 1v9h15V1" fill="#fff" stroke={GRAY} />
        <path d="M4.500 23V13h10l5 6v4" fill="#fff" stroke={GRAY} />
        <path d="M13 13l7 9-4-3z" fill="#666" />
      </Svg>
    </ToolButton>
    <ToolButton label="Facing"><Svg><PageShape x={1} y={4} w={10} h={15} /><PageShape x={13} y={4} w={10} h={15} /></Svg></ToolButton>
    <ToolButton label="Continuous facing">
      <Svg>
        <path d="M.5 1v9h10V1M13.500 1v9h10V1" fill="#fff" stroke={GRAY} strokeWidth="1.3" />
        <path d="M.5 23V13h6l4 5v5M13.500 23V13h6l4 5v5" fill="#fff" stroke={GRAY} strokeWidth="1.3" />
        <path d="M6 13l5 6-4-2zM19 13l5 6-4-2z" fill="#666" />
      </Svg>
    </ToolButton>
    <Grip />
    <ZoomSelect className="w-[82px]" />
    <Divider className="-mx-0.5 h-6" />
    <ToolButton label="Zoom out"><CircleIcon><MinusSign /></CircleIcon></ToolButton>
    <input
      type="range"
      aria-label="Zoom"
      defaultValue={16}
      className="h-5 w-[101px] shrink-0 appearance-none [background:linear-gradient(#8e8e8e,#8e8e8e)_left/20px_3px_no-repeat,linear-gradient(#c0c0c0,#c0c0c0)_center/100%_3px_no-repeat,linear-gradient(#777,#777)_50px_center/1px_11px_no-repeat] [&::-webkit-slider-thumb]:size-5 [&::-webkit-slider-thumb]:appearance-none [&::-webkit-slider-thumb]:rounded-full [&::-webkit-slider-thumb]:border [&::-webkit-slider-thumb]:border-[#777] [&::-webkit-slider-thumb]:bg-[radial-gradient(#888_4px,#fff_5px)]"
    />
    <ToolButton label="Zoom in"><CircleIcon><PlusSign /></CircleIcon></ToolButton>
    <div className="ml-auto flex h-full items-center gap-1 pr-0.5">
      <Grip />
      <ToolButton label="View mode" className="opacity-50">
        <Svg>
          <path d="M4 6h16v12H4z" fill="#fff" stroke="#888" />
          <path d="M9 8h7v8H9z" fill={BLUE} />
          <path d="M5 9h3M5 12h3M5 15h3M17 9h2M17 12h2M17 15h2" stroke="#888" />
        </Svg>
      </ToolButton>
      <Chevron className="text-[#aaa]" />
      <ToolButton label="More" className="self-start">
        <Svg className="size-2" box={8}><path d="M1 1l3 3 3-3M1 7h6" stroke="#333" strokeWidth="1.3" /></Svg>
      </ToolButton>
    </div>
  </footer>
);

type MenuEntry = { label: string; icon: React.ReactNode; shortcut?: string; selected?: boolean; iconOnly?: boolean };

const menuGroups: MenuEntry[][] = [
  [
    { label: 'Order', icon: <ReadingOrderIcon />, iconOnly: true },
    { label: 'Accessibility Checker', icon: <AccessCheckIcon /> },
    { label: 'Accessibility Report', icon: <AccessReportIcon /> },
  ],
  [
    { label: 'Show Loupe Window', icon: <LoupeIcon />, shortcut: 'CTRL+SHIFT+ALT+L' },
    { label: 'Pan and Zoom', icon: <PanZoomIcon /> },
    { label: 'Stamps Palette', icon: <StampIcon /> },
    { label: 'Comment Styles Palette', icon: <CommentStylesIcon /> },
  ],
  [
    { label: 'Spell Check', icon: <SpellIcon /> },
    { label: 'Document Recovery', icon: <RecoveryIcon /> },
    { label: 'History', icon: <CalendarIcon />, selected: true },
  ],
  [{ label: 'Properties Pane', icon: <PropertiesIcon />, shortcut: "CTRL+'" }],
  [
    { label: 'Reset Main Panes Layout', icon: <PanesIcon columns reset /> },
    { label: 'Reset Document Panes Layout', icon: <PanesIcon reset /> },
  ],
];

const PanesMenu = () => (
  <div
    role="menu"
    className="absolute top-0 right-[181px] z-20 w-[331px] overflow-hidden rounded-b-sm bg-[#f3f3f3] px-1 pb-1 shadow-[0_0_6px_#000000a0]"
  >
    {/* the list is scrolled part of the way past its first entry */}
    <div className="-mt-5">
      {menuGroups.map((group, i) => (
        <div key={group[0].label} className={i > 0 ? 'mt-px border-t border-[#c4c4c4] pt-px' : ''}>
          {group.map(({ label, icon, shortcut, selected, iconOnly }) => (
            <button
              key={label}
              role="menuitem"
              aria-label={label}
              className={`flex h-7 w-full items-center gap-[3px] rounded-xs pr-2.5 pl-4 text-left ${selected ? 'bg-[#f5dfa8]' : ''}`}
            >
              {icon}
              {!iconOnly && <span>{label}</span>}
              {shortcut && <span className="ml-auto">{shortcut}</span>}
            </button>
          ))}
        </div>
      ))}
    </div>
  </div>
);

const WindowMenu = () => (
  <div className="absolute top-36 right-0 z-10 flex w-[182px] bg-[#f3f3f3] py-1 shadow-[0_0_5px_#00000090]">
    <div className="flex min-w-0 flex-1 flex-col pl-0.5 whitespace-nowrap">
      <button className="flex h-7 items-center gap-0.5"><WindowsIcon />Document Tabs<Chevron /></button>
      <button className="flex h-7 w-[74px] items-center gap-0.5 border border-[#c3b386] bg-[#e9d7a3]"><PanesIcon />Panes<Chevron /></button>
      <button className="flex h-7 items-center gap-0.5 text-[#8c8c8c]" disabled><PortfolioIcon />Portfolio<Chevron className="ml-0.5 text-[#aaa]" /></button>
    </div>
    <Divider className="h-[84px]" />
    <button className="flex w-[54px] shrink-0 flex-col items-center pt-[5px] leading-[13px]">
      <ThemeIcon />
      <span className="pt-1.5">UI</span>
      <span className="flex items-center gap-0.5">Theme<Chevron /></span>
    </button>
  </div>
);

const App = () => (
  <div className="relative flex h-screen flex-col overflow-hidden rounded-lg border border-[#999] bg-[#f3f3f3] font-['Open_Sans',sans-serif] text-xs text-black">
    <TitleBar />
    <RibbonTabs />
    <Ribbon />
    <DocumentTabs />
    <div className="flex min-h-0 flex-1">
      <Sidebar />
      <div className="flex min-w-0 flex-1 flex-col">
        <Canvas />
        <StatusBar />
      </div>
    </div>
    <WindowMenu />
    <PanesMenu />
  </div>
);

export default App;
